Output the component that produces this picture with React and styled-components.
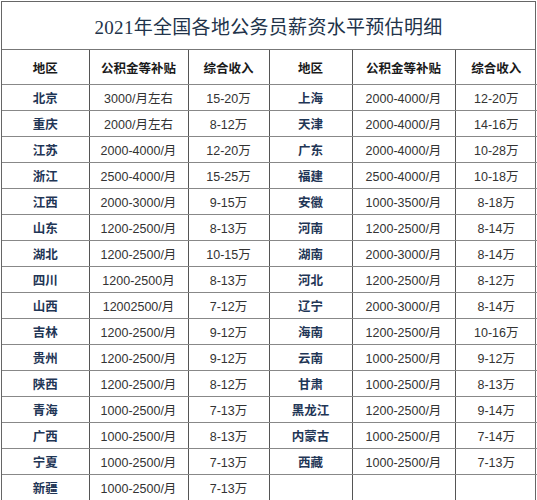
import React from "react";
import styled, { createGlobalStyle } from "styled-components";

const GlobalStyle = createGlobalStyle`
  html, body {
    margin: 0;
    padding: 0;
    background: #ffffff;
  }
  body {
    font-family: "Liberation Sans", "Noto Sans CJK SC", sans-serif;
  }
`;

const leftRows = [
  ["北京", "3000/月左右", "15-20万"],
  ["重庆", "2000/月左右", "8-12万"],
  ["江苏", "2000-4000/月", "12-20万"],
  ["浙江", "2500-4000/月", "15-25万"],
  ["江西", "2000-3000/月", "9-15万"],
  ["山东", "1200-2500/月", "8-13万"],
  ["湖北", "1200-2500/月", "10-15万"],
  ["四川", "1200-2500月", "8-13万"],
  ["山西", "12002500/月", "7-12万"],
  ["吉林", "1200-2500/月", "9-12万"],
  ["贵州", "1200-2500/月", "9-12万"],
  ["陕西", "1200-2500/月", "8-12万"],
  ["青海", "1000-2500/月", "7-13万"],
  ["广西", "1000-2500/月", "8-13万"],
  ["宁夏", "1000-2500/月", "7-13万"],
  ["新疆", "1000-2500/月", "7-13万"],
];

const rightRows = [
  ["上海", "2000-4000/月", "12-20万"],
  ["天津", "2000-4000/月", "14-16万"],
  ["广东", "2000-4000/月", "10-28万"],
  ["福建", "2500-4000/月", "10-18万"],
  ["安徽", "1000-3500/月", "8-18万"],
  ["河南", "1200-2500/月", "8-14万"],
  ["湖南", "2000-3000/月", "8-14万"],
  ["河北", "1200-2500/月", "8-12万"],
  ["辽宁", "2000-3000/月", "8-14万"],
  ["海南", "1200-2500/月", "10-16万"],
  ["云南", "1000-2500/月", "9-12万"],
  ["甘肃", "1000-2500/月", "8-13万"],
  ["黑龙江", "1200-2500/月", "9-14万"],
  ["内蒙古", "1000-2500/月", "7-14万"],
  ["西藏", "1000-2500/月", "7-13万"],
  ["", "", ""],
];

const colWidths = [87, 99, 81, 83, 103, 82];
const headers = ["地区", "公积金等补贴", "综合收入", "地区", "公积金等补贴", "综合收入"];

export default function App() {
  return (
    <>
      <GlobalStyle />
      <Page>
        <Sheet>
          <Title>2021年全国各地公务员薪资水平预估明细</Title>
          <Table>
            <colgroup>
              {colWidths.map((w, i) => (
                <col key={i} style={{ width: w }} />
              ))}
            </colgroup>
            <thead>
              <tr>
                {headers.map((h, i) => (
                  <HeadCell key={i}>{h}</HeadCell>
                ))}
              </tr>
            </thead>
            <tbody>
              {leftRows.map((row, i) => {
                const r = rightRows[i];
                return (
                  <Row key={i}>
                    <Region>{row[0]}</Region>
                    <Cell>{row[1]}</Cell>
                    <Cell>{row[2]}</Cell>
                    <Region>{r[0]}</Region>
                    <Cell>{r[1]}</Cell>
                    <Cell>{r[2]}</Cell>
                  </Row>
                );
              })}
            </tbody>
          </Table>
        </Sheet>
      </Page>
    </>
  );
}

const Page = styled.div`
  width: 537px;
  height: 500px;
  overflow: hidden;
  padding: 1px 1px 0 1px;
  box-sizing: border-box;
`;

const Sheet = styled.div`
  border: 1px solid #666;
  border-bottom: none;
  box-sizing: border-box;
`;

const Title = styled.div`
  height: 47px;
  display: flex;
  align-items: center;
  justify-content: center;
  font-family: "Liberation Serif", "Noto Sans CJK SC", serif;
  font-size: 19px;
  font-weight: 400;
  color: #22334a;
  letter-spacing: 0.3px;
  border-bottom: 1px solid #777;
`;

const Table = styled.table`
  width: 100%;
  border-collapse: collapse;
  table-layout: fixed;
`;

const HeadCell = styled.th`
  height: 34px;
  padding: 0;
  font-family: "Noto Sans CJK SC", sans-serif;
  font-size: 12.5px;
  font-weight: 700;
  color: #1a1a1a;
  text-align: center;
  border-left: 1px solid #555;
  border-bottom: 1px solid #888;
  &:first-child {
    border-left: none;
  }
`;

const Row = styled.tr`
  height: 26px;
`;

const Cell = styled.td`
  padding: 0;
  height: 25px;
  text-align: center;
  font-family: "Liberation Sans", "Noto Sans CJK SC", sans-serif;
  font-size: 12.5px;
  color: #333;
  border-left: 1px solid #555;
  border-bottom: 1px solid #888;
`;

const Region = styled(Cell)`
  font-family: "Noto Sans CJK SC", sans-serif;
  font-size: 12.5px;
  font-weight: 700;
  color: #1f3656;
  &:first-child {
    border-left: none;
  }
`;
